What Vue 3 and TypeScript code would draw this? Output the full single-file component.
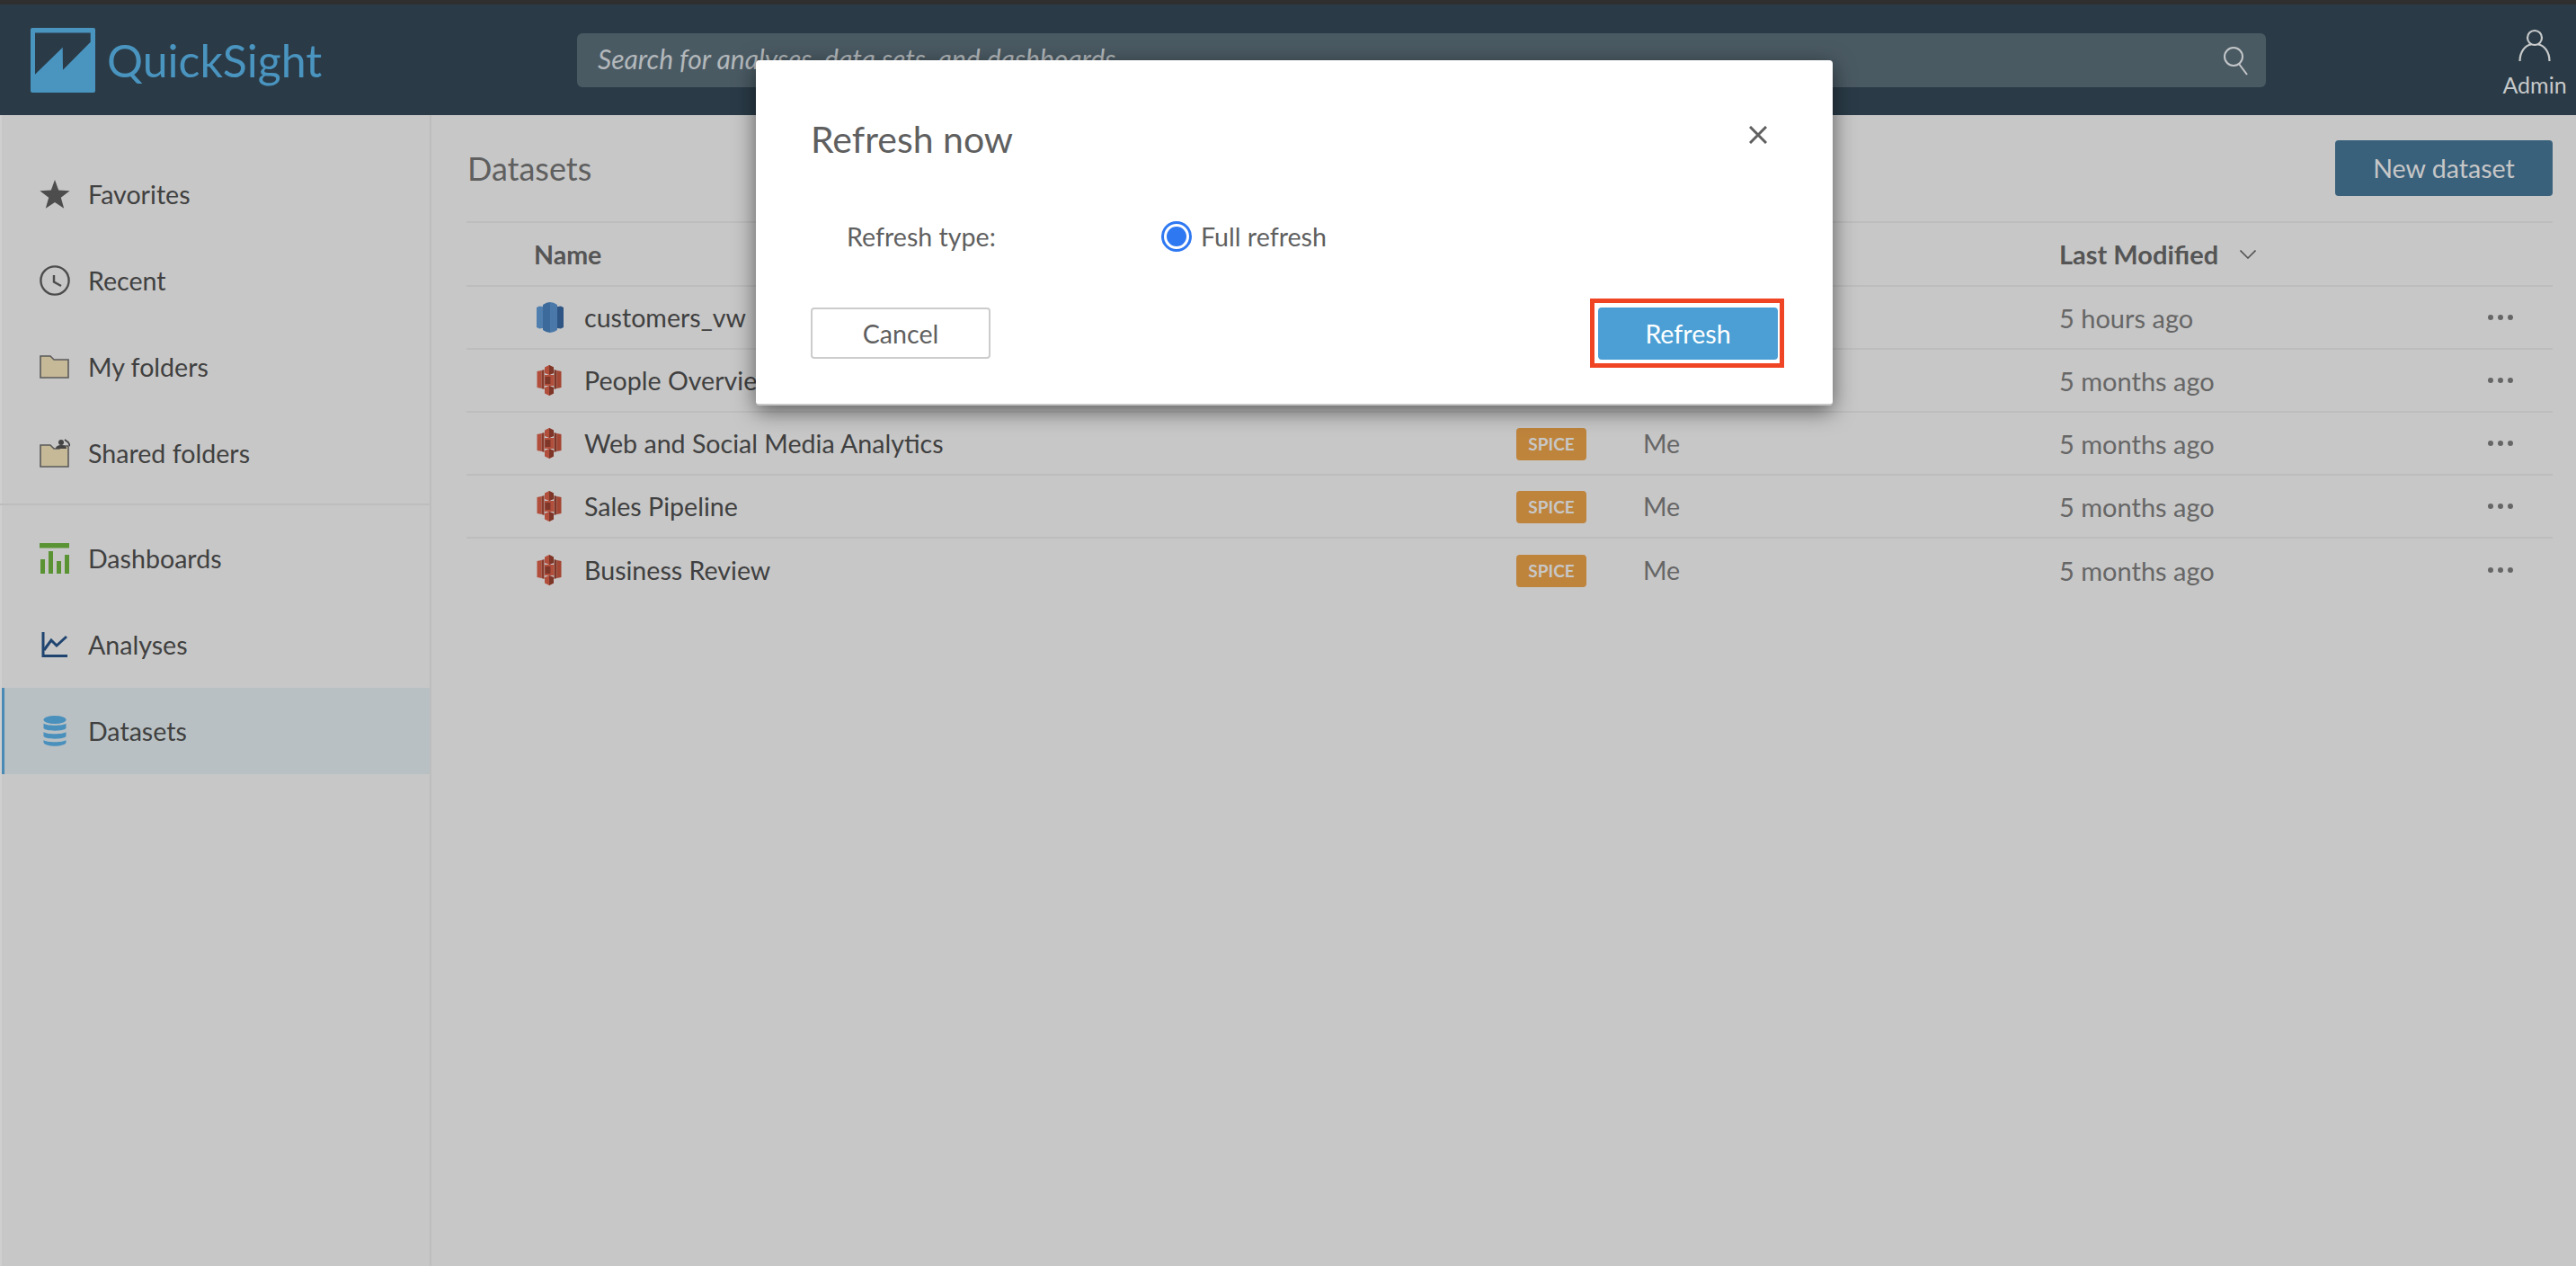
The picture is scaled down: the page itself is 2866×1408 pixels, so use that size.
<script setup lang="ts">
const topNav = [
  { label: 'Favorites', icon: 'star' },
  { label: 'Recent', icon: 'clock' },
  { label: 'My folders', icon: 'folder' },
  { label: 'Shared folders', icon: 'shared' },
]

const assetNav = [
  { label: 'Dashboards', icon: 'dash', active: false },
  { label: 'Analyses', icon: 'analysis', active: false },
  { label: 'Datasets', icon: 'db', active: true },
]

const rows = [
  { name: 'customers_vw', source: 'redshift', spice: false, owner: '', modified: '5 hours ago' },
  { name: 'People Overview', source: 's3', spice: true, owner: 'Me', modified: '5 months ago' },
  { name: 'Web and Social Media Analytics', source: 's3', spice: true, owner: 'Me', modified: '5 months ago' },
  { name: 'Sales Pipeline', source: 's3', spice: true, owner: 'Me', modified: '5 months ago' },
  { name: 'Business Review', source: 's3', spice: true, owner: 'Me', modified: '5 months ago' },
]
</script>

<template>
  <div class="page">
    <div class="topline"></div>
    <header class="header">
      <div class="brand">
        <svg class="logo" viewBox="0 0 72 72">
          <rect width="72" height="72" rx="2" fill="#4a94c0" />
          <path d="M5 5.5H66.7V15.7L36 46.7L35.7 21.7L5 51.7Z" fill="#2a3b47" />
        </svg>
        <span class="brand-name">QuickSight</span>
      </div>
      <div class="search">
        <span class="search-text">Search for analyses, data sets, and dashboards</span>
        <svg class="search-icon" viewBox="0 0 28 34" fill="none" stroke="#c4c7c9" stroke-width="2">
          <circle cx="12" cy="13" r="10" />
          <path d="M18 21L27 33" />
        </svg>
      </div>
      <div class="user">
        <svg class="user-icon" viewBox="0 0 36 36" fill="none" stroke="#c7c9ca" stroke-width="2.2">
          <circle cx="18" cy="10" r="8" />
          <path d="M1.5 36C1.5 25 8 18 14 17.5M34.5 36C34.5 25 28 18 22 17.5" />
        </svg>
        <span>Admin</span>
      </div>
    </header>

    <div class="body">
      <aside class="sidebar">
        <nav class="nav nav-top">
          <a v-for="item in topNav" :key="item.label" class="nav-item">
            <span class="nav-icon">
              <svg v-if="item.icon === 'star'" width="34" height="32" viewBox="0 0 34 32">
                <path d="M17 0L21.2 11.6L33.6 12.2L23.8 19.8L27.2 31.8L17 25L6.8 31.8L10.2 19.8L.4 12.2L12.8 11.6Z" fill="#4d4d4d" />
              </svg>
              <svg v-else-if="item.icon === 'clock'" width="34" height="34" viewBox="0 0 34 34" fill="none" stroke="#4d4d4d" stroke-width="2.4">
                <circle cx="17" cy="17" r="15.6" />
                <path d="M16 11V18.5L24 23" />
              </svg>
              <svg v-else-if="item.icon === 'folder'" width="34" height="26" viewBox="0 0 34 26">
                <path d="M1 25V1H12L16 5H32V25Z" fill="#c6b998" stroke="#5a5a5a" stroke-width="1.6" />
              </svg>
              <svg v-else-if="item.icon === 'shared'" width="34" height="32" viewBox="0 0 34 32">
                <path d="M1 31V7H12L16 11H22L24 8H32V31Z" fill="#c6b998" stroke="#5a5a5a" stroke-width="1.6" />
                <circle cx="24" cy="4" r="3" fill="#444" />
                <path d="M18 11C18 8 21 7 24 7C27 7 30 8 30 11Z" fill="#444" />
                <path d="M28 1L32 4L34 8" fill="none" stroke="#444" stroke-width="1.8" />
              </svg>
            </span>
            <span>{{ item.label }}</span>
          </a>
        </nav>
        <div class="nav-divider"></div>
        <nav class="nav">
          <a
            v-for="item in assetNav"
            :key="item.label"
            class="nav-item"
            :class="{ active: item.active }"
          >
            <span class="nav-icon">
              <svg v-if="item.icon === 'dash'" width="34" height="34" viewBox="0 0 34 34" fill="#5a9334">
                <rect x="0" y="0" width="33" height="5.5" />
                <rect x="1" y="18" width="5" height="16" />
                <rect x="10" y="9" width="5" height="25" />
                <rect x="19" y="20" width="5" height="14" />
                <rect x="28" y="13" width="5" height="21" />
              </svg>
              <svg v-else-if="item.icon === 'analysis'" width="30" height="28" viewBox="0 0 30 28" fill="none" stroke="#1f4470" stroke-width="3">
                <path d="M2 0V26.5H29" />
                <path d="M3 20L11 9L17 15L28 5" />
              </svg>
              <svg v-else-if="item.icon === 'db'" width="26" height="34" viewBox="0 0 26 34" fill="#4a90bd">
                <ellipse cx="13" cy="4.5" rx="12.5" ry="4.5" />
                <path d="M.5 8.5C3 11.5 23 11.5 25.5 8.5V14C23 17.5 3 17.5 .5 14Z" />
                <path d="M.5 18C3 21 23 21 25.5 18V23C23 26.5 3 26.5 .5 23Z" />
                <path d="M.5 27C3 30 23 30 25.5 27V30C23 35 3 35 .5 30Z" />
              </svg>
            </span>
            <span>{{ item.label }}</span>
          </a>
        </nav>
      </aside>

      <main class="content">
        <div class="title-row">
          <h1 class="title">Datasets</h1>
          <button class="new-btn">New dataset</button>
        </div>
        <div class="table">
          <div class="row head">
            <span class="col-icon"></span>
            <span class="col-name">Name</span>
            <span class="col-badge"></span>
            <span class="col-owner"></span>
            <span class="col-date">
              Last Modified
              <svg class="chevron" width="18" height="10" viewBox="0 0 18 10" fill="none" stroke="#555" stroke-width="1.6">
                <path d="M.5 .5L9 9L17.5 .5" />
              </svg>
            </span>
            <span class="col-more"></span>
          </div>
          <div v-for="row in rows" :key="row.name" class="row">
            <span class="col-icon">
              <svg v-if="row.source === 'redshift'" width="30" height="34" viewBox="0 0 30 34">
                <path d="M0 6L3 4.500L7 5V29L3 29.500L0 28Z" fill="#4f7fae" />
                <path d="M30 6L27 4.500L23 5V29L27 29.500L30 28Z" fill="#2f5584" />
                <path d="M7 3Q11 0 15 0V34Q11 34 7 31Z" fill="#3c6a9b" />
                <path d="M23 3Q19 0 15 0V34Q19 34 23 31Z" fill="#4a79a9" />
              </svg>
              <svg v-else width="28" height="34" viewBox="0 0 27 34">
                <path d="M0 7L5 6V26L0 25Z" fill="#b24f3c" />
                <path d="M5 6L8 5V27L5 26Z" fill="#8a3b2c" />
                <path d="M19 5L22 6V26L19 27Z" fill="#7e3628" />
                <path d="M22 6L27 7V25L22 26Z" fill="#a34634" />
                <rect x="8.500" y="11" width="10.500" height="12" fill="#b24f3c" />
                <rect x="9" y="13" width="6" height="8" fill="#7e3628" />
                <path d="M13.500 0L18.500 2.500V9L13.500 11L8.500 9V2.500Z" fill="#b24f3c" />
                <path d="M13.500 0L18.500 2.500V9L13.500 11Z" fill="#7e3628" />
                <path d="M13.500 23L18.500 25V31.500L13.500 34L8.500 31.500V25Z" fill="#b24f3c" />
                <path d="M13.500 23L18.500 25V31.500L13.500 34Z" fill="#7e3628" />
              </svg>
            </span>
            <span class="col-name">{{ row.name }}</span>
            <span class="col-badge"><span v-if="row.spice" class="badge">SPICE</span></span>
            <span class="col-owner">{{ row.owner }}</span>
            <span class="col-date">{{ row.modified }}</span>
            <span class="col-more"><i></i><i></i><i></i></span>
          </div>
        </div>
      </main>
    </div>

    <section class="modal">
      <div class="modal-head">
        <h2>Refresh now</h2>
        <svg class="close" width="20" height="20" viewBox="0 0 20 20" stroke="#5f5f5f" stroke-width="3">
          <path d="M1 1L19 19M19 1L1 19" />
        </svg>
      </div>
      <div class="modal-field">
        <span class="field-label">Refresh type:</span>
        <label class="radio-option">
          <span class="radio"></span>
          Full refresh
        </label>
      </div>
      <div class="modal-actions">
        <button class="cancel">Cancel</button>
        <span class="callout"><button class="refresh">Refresh</button></span>
      </div>
    </section>
  </div>
</template>

<style scoped>
.page {
  position: relative;
  width: 2866px;
  height: 1408px;
  overflow: hidden;
  display: flex;
  flex-direction: column;
  background: #c7c7c7;
  font-family: Lato, "Noto Sans", sans-serif;
  font-size: 28.6px;
  color: #404040;
}

.topline {
  height: 5px;
  background: #2f2f2f;
  flex-shrink: 0;
}

.header {
  height: 123px;
  flex-shrink: 0;
  background: #2a3b47;
  display: flex;
  align-items: center;
  padding-left: 34px;
}

.brand {
  display: flex;
  align-items: center;
  gap: 13px;
  width: 608px;
  height: 72px;
}

.logo {
  width: 72px;
  height: 72px;
}

.brand-name {
  font-size: 50px;
  color: #4a94c0;
}

.search {
  width: 1879px;
  height: 60px;
  border-radius: 6px;
  background: #4a5a63;
  display: flex;
  align-items: center;
  justify-content: space-between;
  padding: 0 20px 0 23px;
  box-sizing: border-box;
}

.search-text {
  font-style: italic;
  font-size: 30px;
  line-height: 34px;
  margin-top: -3px;
  color: #b3b8bb;
}

.search-icon {
  width: 28px;
  height: 34px;
}

.user {
  margin-left: auto;
  width: 70px;
  margin-right: 11px;
  display: flex;
  flex-direction: column;
  align-items: center;
  gap: 14px;
  font-size: 25px;
  color: #c7c9ca;
  margin-top: 4px;
  line-height: 24px;
}

.user-icon {
  width: 36px;
  height: 36px;
}

.body {
  flex: 1;
  display: flex;
  min-height: 0;
}

.sidebar {
  width: 480px;
  flex-shrink: 0;
  box-sizing: border-box;
  border-left: 2px solid #cfcfcf;
  border-right: 2px solid #bdbdbd;
  padding-top: 40px;
}

.nav-item {
  height: 96px;
  display: flex;
  align-items: center;
  padding-left: 42px;
  box-sizing: border-box;
}

.nav-icon {
  width: 34px;
  margin-right: 20px;
  display: flex;
  justify-content: center;
  flex-shrink: 0;
}

.nav-item.active {
  background: #b8c0c3;
  box-shadow: inset 3px 0 0 #4a8ab5;
}

.nav-divider {
  height: 2px;
  background: #bdbdbd;
  margin: 8px 0 11px -2px;
}

.content {
  flex: 1;
  padding: 28px 26px 0 39px;
  min-width: 0;
}

.title-row {
  display: flex;
  justify-content: space-between;
  align-items: center;
  height: 62px;
  margin-bottom: 28px;
}

.title {
  margin: 0 0 0 1px;
  font-size: 36px;
  font-weight: 400;
  color: #5f5f5f;
}

.new-btn {
  width: 242px;
  height: 62px;
  border: 0;
  border-radius: 4px;
  background: #3a617c;
  color: #c7c7c7;
  font: inherit;
}

.table {
  border-top: 2px solid #bdbdbd;
}

.row {
  height: 70px;
  display: flex;
  align-items: center;
  border-bottom: 2px solid #bdbdbd;
  box-sizing: border-box;
}

.row:last-child {
  border-bottom: 0;
}

.row.head {
  height: 71px;
  font-weight: 700;
  color: #555;
}

.col-icon {
  width: 131px;
  padding-left: 78px;
  box-sizing: border-box;
  display: flex;
  flex-shrink: 0;
}

.head .col-icon {
  width: 75px;
  padding-left: 0;
}

.col-name {
  width: 1037px;
  flex-shrink: 0;
  white-space: nowrap;
}

.head .col-name {
  width: 1093px;
}

.col-badge {
  width: 141px;
  flex-shrink: 0;
  display: flex;
}

.badge {
  width: 78px;
  height: 36px;
  margin-top: 2px;
  border-radius: 4px;
  background: #bf843c;
  color: #c7c7c7;
  font-size: 19px;
  font-weight: 700;
  line-height: 36px;
  text-align: center;
}

.col-owner {
  width: 463px;
  flex-shrink: 0;
  color: #666;
}

.col-date {
  flex: 1;
  color: #666;
  font-size: 29px;
  display: flex;
  align-items: center;
}

.head .col-date {
  color: #555;
}

.chevron {
  margin-left: 24px;
}

.col-more {
  width: 72px;
  flex-shrink: 0;
  display: flex;
  gap: 5px;
}

.col-more i {
  width: 6px;
  height: 6px;
  border-radius: 50%;
  background: #666;
}

.modal {
  position: absolute;
  left: 841px;
  top: 67px;
  width: 1198px;
  height: 384px;
  box-sizing: border-box;
  padding: 0 54px 0 61px;
  background: #fff;
  border-radius: 4px;
  border-bottom: 2px solid #c8c8c8;
  box-shadow: 0 6px 24px rgba(0, 0, 0, 0.55);
  color: #5f5f5f;
}

.modal-head {
  height: 130px;
  display: flex;
  align-items: flex-start;
  justify-content: space-between;
  padding-right: 19px;
}

.modal-head h2 {
  margin: 64px 0 0;
  font-size: 41px;
  line-height: 48px;
  font-weight: 400;
}

.close {
  margin-top: 73px;
}

.modal-field {
  height: 135px;
  display: flex;
  align-items: flex-start;
  padding: 49px 0 0 40px;
  box-sizing: border-box;
  line-height: 34px;
}

.field-label {
  width: 350px;
}

.radio-option {
  display: flex;
  align-items: center;
  gap: 10px;
}

.radio {
  width: 34px;
  height: 34px;
  border-radius: 50%;
  box-sizing: border-box;
  border: 3px solid #2e78f2;
  padding: 3px;
  background: #2e78f2 content-box;
}

.modal-actions {
  display: flex;
  align-items: center;
  justify-content: space-between;
}

.cancel {
  width: 200px;
  height: 57px;
  border: 2px solid #ccc;
  border-radius: 4px;
  background: #fff;
  color: #5f5f5f;
  font: inherit;
}

.callout {
  border: 5px solid #f04524;
  padding: 5px 2px 4px 4px;
  display: flex;
}

.refresh {
  width: 200px;
  height: 58px;
  border: 0;
  border-radius: 4px;
  background: #4b9fd5;
  color: #fff;
  font: inherit;
}
</style>

<style>
html,
body {
  margin: 0;
  padding: 0;
}
</style>
